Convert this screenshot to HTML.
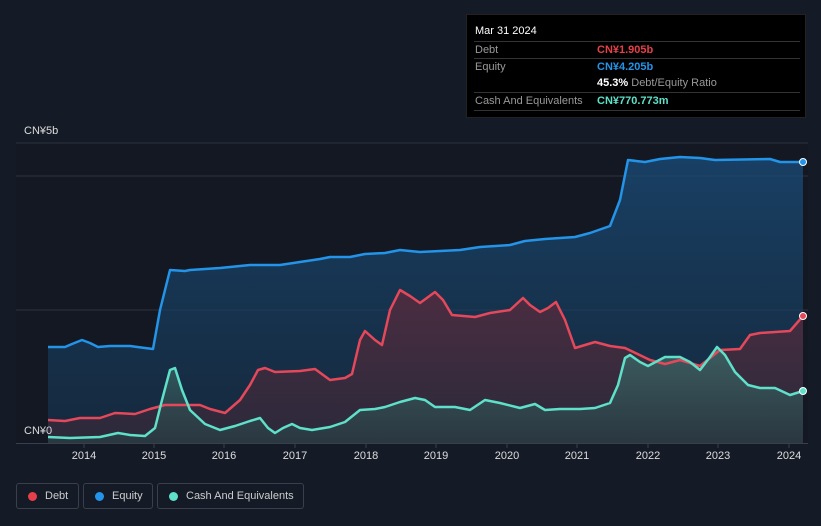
<!DOCTYPE html>
<html><head><meta charset="utf-8"><style>
body{margin:0;width:821px;height:526px;background:#151b26;font-family:"Liberation Sans",sans-serif;overflow:hidden;position:relative}
.tip{position:absolute;left:466px;top:14px;width:340px;height:104px;background:#000;border:1px solid #222;box-sizing:border-box}
.tip .t{position:absolute;left:8px;top:10px;color:#fff;font-size:11px}
.row{position:absolute;left:7px;width:326px;border-top:1px solid #333;height:17px;font-size:11px;color:#999}
.row span{position:absolute;left:123px;top:2px;font-weight:bold}
.row .l{position:absolute;left:1px;top:2px}
.lg{position:absolute;top:483px;height:26px;border:1px solid #3a404b;border-radius:3px;box-sizing:border-box;color:#ccc;font-size:11px;line-height:24px}
.lg i{position:absolute;left:11px;top:8px;width:9px;height:9px;border-radius:50%}
.lg b{font-weight:normal;position:absolute;left:28px}
.yr{position:absolute;top:450px;color:#ddd;font-size:11px;width:40px;margin-left:-20px;text-align:center}
</style></head><body>
<svg width="821" height="526" style="position:absolute;left:0;top:0">
<defs>
<linearGradient id="ge" x1="0" y1="0" x2="0" y2="1"><stop offset="0" stop-color="#1a4a75" stop-opacity=".8"/><stop offset="1" stop-color="#16344f" stop-opacity=".6"/></linearGradient>
<linearGradient id="gd" x1="0" y1="0" x2="0" y2="1"><stop offset="0" stop-color="#5a2a3c" stop-opacity=".8"/><stop offset="1" stop-color="#3a2a38" stop-opacity=".6"/></linearGradient>
<linearGradient id="gc" x1="0" y1="0" x2="0" y2="1"><stop offset="0" stop-color="#3c6a6a" stop-opacity=".8"/><stop offset="1" stop-color="#2a3d44" stop-opacity=".7"/></linearGradient>
</defs>
<rect x="16" y="143" width="792" height="300" fill="#131823"/>
<line x1="16" y1="143" x2="808" y2="143" stroke="#2c323d"/>
<line x1="16" y1="176" x2="808" y2="176" stroke="#2c323d"/>
<line x1="16" y1="310" x2="808" y2="310" stroke="#2c323d"/>
<path fill="url(#ge)" d="M48,347 L65,347 72,344 82,340 90,343 98,347 110,346 130,346 145,348 153,349 160,310 170,270 185,271 190,270 220,268 250,265 280,265 300,262 320,259 330,257 350,257 365,254 385,253 400,250 420,252 460,250 480,247 510,245 525,241 545,239 575,237 590,233 610,226 620,200 628,160 645,162 660,159 680,157 700,158 715,160 770,159 780,162 803,162 L803,443 48,443Z"/>
<path fill="url(#gd)" d="M48,420 L65,421 80,418 100,418 115,413 135,414 150,409 165,405 200,405 210,409 225,413 240,400 250,385 258,370 265,368 275,372 300,371 315,369 330,380 345,378 352,374 360,340 365,331 375,340 382,345 390,310 400,290 410,296 420,303 435,292 443,300 452,315 475,317 490,313 510,310 523,298 530,305 540,312 548,308 556,302 565,320 575,348 585,345 595,342 610,346 625,348 650,360 665,364 680,360 700,366 720,350 740,349 750,335 760,333 790,331 803,316 L803,443 48,443Z"/>
<path fill="url(#gc)" d="M48,437 L70,438 100,437 118,433 130,435 145,436 155,428 162,400 170,370 175,368 182,390 190,410 205,424 220,430 235,426 250,421 260,418 268,428 275,433 283,428 292,424 300,428 312,430 330,427 345,422 360,410 375,409 385,407 400,402 415,398 425,400 435,407 455,407 470,410 485,400 500,403 520,408 535,404 545,410 560,409 580,409 595,408 610,403 618,385 625,358 630,355 640,362 648,366 665,357 680,357 690,362 700,370 710,357 717,347 725,355 735,372 748,385 760,388 775,388 790,395 803,391 L803,443 48,443Z"/>
<g fill="none" stroke-width="2.5" stroke-linejoin="round">
<polyline stroke="#2394e8" points="48,347 65,347 72,344 82,340 90,343 98,347 110,346 130,346 145,348 153,349 160,310 170,270 185,271 190,270 220,268 250,265 280,265 300,262 320,259 330,257 350,257 365,254 385,253 400,250 420,252 460,250 480,247 510,245 525,241 545,239 575,237 590,233 610,226 620,200 628,160 645,162 660,159 680,157 700,158 715,160 770,159 780,162 803,162"/>
<polyline stroke="#e5485a" points="48,420 65,421 80,418 100,418 115,413 135,414 150,409 165,405 200,405 210,409 225,413 240,400 250,385 258,370 265,368 275,372 300,371 315,369 330,380 345,378 352,374 360,340 365,331 375,340 382,345 390,310 400,290 410,296 420,303 435,292 443,300 452,315 475,317 490,313 510,310 523,298 530,305 540,312 548,308 556,302 565,320 575,348 585,345 595,342 610,346 625,348 650,360 665,364 680,360 700,366 720,350 740,349 750,335 760,333 790,331 803,316"/>
<polyline stroke="#5ee0c9" points="48,437 70,438 100,437 118,433 130,435 145,436 155,428 162,400 170,370 175,368 182,390 190,410 205,424 220,430 235,426 250,421 260,418 268,428 275,433 283,428 292,424 300,428 312,430 330,427 345,422 360,410 375,409 385,407 400,402 415,398 425,400 435,407 455,407 470,410 485,400 500,403 520,408 535,404 545,410 560,409 580,409 595,408 610,403 618,385 625,358 630,355 640,362 648,366 665,357 680,357 690,362 700,370 710,357 717,347 725,355 735,372 748,385 760,388 775,388 790,395 803,391"/>
</g>
<circle cx="803" cy="162" r="3.5" fill="#2394e8" stroke="#fff" stroke-width="1"/>
<circle cx="803" cy="316" r="3.5" fill="#e5485a" stroke="#fff" stroke-width="1"/>
<circle cx="803" cy="391" r="3.5" fill="#5ee0c9" stroke="#fff" stroke-width="1"/>
<line x1="16" y1="443.5" x2="808" y2="443.5" stroke="#3a404b"/>
<g stroke="#3a404b"><line x1="84" y1="443" x2="84" y2="448"/><line x1="154" y1="443" x2="154" y2="448"/><line x1="224" y1="443" x2="224" y2="448"/><line x1="295" y1="443" x2="295" y2="448"/><line x1="366" y1="443" x2="366" y2="448"/><line x1="436" y1="443" x2="436" y2="448"/><line x1="507" y1="443" x2="507" y2="448"/><line x1="577" y1="443" x2="577" y2="448"/><line x1="648" y1="443" x2="648" y2="448"/><line x1="718" y1="443" x2="718" y2="448"/><line x1="789" y1="443" x2="789" y2="448"/></g>
<rect x="16" y="424" width="32" height="18" fill="#131823"/>
</svg>
<div style="position:absolute;left:24px;top:125px;color:#ddd;font-size:11px">CN¥5b</div>
<div style="position:absolute;left:24px;top:425px;color:#ddd;font-size:11px">CN¥0</div>
<div class="yr" style="left:84px">2014</div><div class="yr" style="left:154px">2015</div><div class="yr" style="left:224px">2016</div><div class="yr" style="left:295px">2017</div><div class="yr" style="left:366px">2018</div><div class="yr" style="left:436px">2019</div><div class="yr" style="left:507px">2020</div><div class="yr" style="left:577px">2021</div><div class="yr" style="left:648px">2022</div><div class="yr" style="left:718px">2023</div><div class="yr" style="left:789px">2024</div>
<div class="tip">
<div class="t">Mar 31 2024</div>
<div class="row" style="top:26px"><div class="l">Debt</div><span style="color:#e5404a">CN¥1.905b</span></div>
<div class="row" style="top:43px"><div class="l">Equity</div><span style="color:#2394e8">CN¥4.205b</span></div>
<div class="row" style="top:60px;border-top:none"><span style="color:#fff">45.3% <b style="color:#999;font-weight:normal">Debt/Equity Ratio</b></span></div>
<div class="row" style="top:77px;border-bottom:1px solid #333"><div class="l">Cash And Equivalents</div><span style="color:#5ee0c9">CN¥770.773m</span></div>
</div>
<div class="lg" style="left:16px;width:63px"><i style="background:#e5404a"></i><b>Debt</b></div>
<div class="lg" style="left:83px;width:70px"><i style="background:#2394e8"></i><b>Equity</b></div>
<div class="lg" style="left:157px;width:147px"><i style="background:#5ee0c9"></i><b>Cash And Equivalents</b></div>
</body></html>
